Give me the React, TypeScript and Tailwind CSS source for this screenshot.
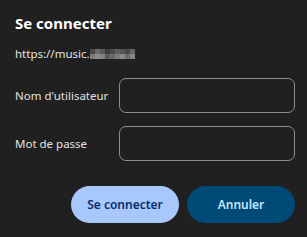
import React from "react";

const blur = [
  ["#4a4a4a", "#6a6a6a", "#5a5a5a", "#3e3e3e", "#4c4c4c", "#5e5e5e", "#555555", "#4a4a4a", "#666666"],
  ["#7a7a7a", "#8c8c8c", "#808080", "#5c5c5c", "#6b6671", "#7a7a7a", "#8a8a8a", "#6e6e6e", "#858585"],
];

export default function App() {
  return (
    <div
      className="w-[307px] h-[237px] bg-[#202020] text-[#e3e3e3] pl-[15px] pr-[12px] pt-[13px]"
      style={{ fontFamily: '"Noto Sans", "Open Sans", sans-serif' }}
    >
      <h1 className="text-[15px] font-bold leading-[20px] text-white">Se connecter</h1>
      <div className="mt-[13px] flex items-center text-[11.5px] leading-[16px]">
        <span>https://music.</span>
        <span className="flex flex-col">
          {blur.map((row, i) => (
            <span key={i} className="flex">
              {row.map((c, j) => (
                <span key={j} className="w-[5px] h-[5px]" style={{ backgroundColor: c }} />
              ))}
            </span>
          ))}
        </span>
      </div>
      <div className="mt-[16px] flex flex-col gap-[13px]">
        <div className="flex items-center justify-between">
          <span className="text-[11.5px]">Nom d'utilisateur</span>
          <input className="w-[176px] h-[35px] rounded-[7px] border border-[#8e8e8e] bg-transparent outline-none" />
        </div>
        <div className="flex items-center justify-between">
          <span className="text-[11.5px]">Mot de passe</span>
          <input type="password" className="w-[176px] h-[35px] rounded-[7px] border border-[#8e8e8e] bg-transparent outline-none" />
        </div>
      </div>
      <div className="mt-[25px] flex justify-end gap-[8px]">
        <button className="w-[108px] h-[37px] rounded-full bg-[#a8c7fa] text-[#062e6f] text-[12px] font-semibold">
          Se connecter
        </button>
        <button className="w-[108px] h-[37px] rounded-full bg-[#004a77] text-[#c2e7ff] text-[12px] font-semibold">
          Annuler
        </button>
      </div>
    </div>
  );
}
